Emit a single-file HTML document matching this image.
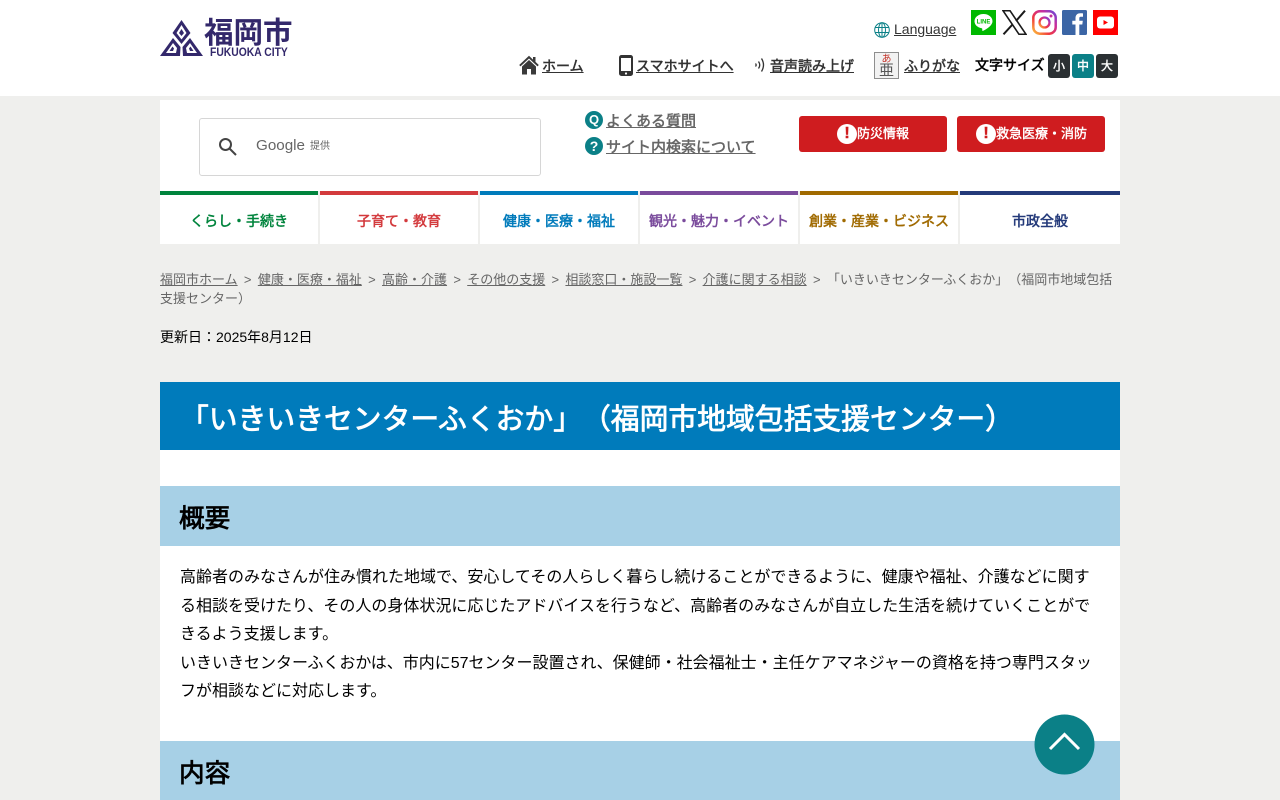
<!DOCTYPE html>
<html lang="ja">
<head>
<meta charset="utf-8">
<title>「いきいきセンターふくおか」（福岡市地域包括支援センター）</title>
<style>
html,body{margin:0;padding:0;width:1280px;height:800px;overflow:hidden;background:#efefed}
body{position:relative;font-family:"Liberation Sans","Noto Sans CJK JP",sans-serif;color:#000;text-spacing-trim:space-all}
.a{position:absolute;white-space:nowrap}
a{color:inherit;text-decoration:underline}
.b{font-weight:400;-webkit-text-stroke:.5px currentColor}
.hl{color:#333;font-size:14px;line-height:20px;font-weight:400;-webkit-text-stroke:.5px currentColor}
.nav{position:absolute;top:191px;height:49px;background:#fff;border-top:4px solid;text-align:center;font-size:14px;line-height:52px;font-weight:400;-webkit-text-stroke:.5px currentColor}
.bc{color:#666;font-size:13px}
.s{display:inline-block;width:20.200px;text-align:center}
.btn{position:absolute;top:116px;height:36px;width:148px;background:#cf1c1f;border-radius:3px;color:#fff;font-size:13px;line-height:36px;font-weight:400;-webkit-text-stroke:.4px currentColor}
.sz{position:absolute;top:54px;width:22px;height:24px;border-radius:3px;background:#2b3033;color:#fff;text-align:center;font-size:12px;line-height:24px;-webkit-text-stroke:.4px #fff}
h1,h2,p{margin:0;font-family:inherit;font-weight:400}
</style>
</head>
<body>
<div class="a" style="left:0;top:0;width:1280px;height:96px;background:#fff"></div>

<svg class="a" style="left:160px;top:20px" width="44" height="37" viewBox="0 0 44 37">
<g fill="#33286b">
<path d="M21.500 0L30.500 13L21.500 24L12.500 13Z"/>
<path d="M13 18L20.500 27L20 36H0Z"/>
<path d="M30 18L43 36H23L22.500 27Z"/>
</g>
<g fill="#fff">
<path d="M21.500 5L26.500 13L21.500 19.500L16.500 13Z"/>
<path d="M13 23L17 28L16 33H6Z"/>
<path d="M30 23L37 33H27L26 28Z"/>
</g>
<g fill="#33286b">
<path d="M21.500 9L24 13L21.500 16L19 13Z"/>
<path d="M12.500 26.500L14 28.500L13 31H9.500Z"/>
<path d="M30.500 26.500L33.500 31H30L29 28.500Z"/>
</g>
</svg>
<div class="a" style="left:204px;top:15px;font-size:29.500px;font-weight:bold;color:#33286b;line-height:38px">福岡市</div>
<div class="a" style="left:210px;top:46px;font-size:11.500px;font-weight:bold;color:#33286b;line-height:14px;transform:scaleX(.9);transform-origin:left">FUKUOKA CITY</div>

<svg class="a" style="left:874px;top:22px" width="16" height="16" viewBox="0 0 16 16" fill="none" stroke="#0b8087" stroke-width="1">
<circle cx="8" cy="8" r="7.300"/><ellipse cx="8" cy="8" rx="3.500" ry="7.300"/><path d="M8 .7V15.300M1 5.500H15M1 10.500H15"/>
</svg>
<a class="a" style="left:894px;top:20px;font-size:14px;line-height:18px;color:#333">Language</a>

<svg class="a" style="left:971px;top:10px" width="25" height="25" viewBox="0 0 25 25">
<rect width="25" height="25" fill="#00b900"/>
<path d="M12.500 4C7.500 4 3.500 7.200 3.500 11.200C3.500 14.800 6.600 17.500 10.700 18.200C11.500 18.400 11.300 19.500 11.200 20.300C11.100 21 11.800 21 12.500 20.600C15.500 19 21.500 15.500 21.500 11.200C21.500 7.200 17.500 4 12.500 4Z" fill="#fff"/>
<text x="12.500" y="13.300" text-anchor="middle" font-size="6" font-weight="bold" fill="#00b900" font-family="Liberation Sans">LINE</text>
</svg>
<svg class="a" style="left:1002px;top:10px" width="25" height="25" viewBox="0 0 25 25">
<path d="M1 .7H8L24 24.300H17Z" fill="#fff" stroke="#1a1a1a" stroke-width="1.600"/>
<path d="M23 .7L14 11M10.500 14.500L1.500 24.300" fill="none" stroke="#1a1a1a" stroke-width="2"/>
</svg>
<svg class="a" style="left:1032px;top:10px" width="25" height="25" viewBox="0 0 25 25">
<defs><linearGradient id="ig" x1="0" y1="1" x2="1" y2="0"><stop offset="0" stop-color="#fdc13b"/><stop offset=".35" stop-color="#f0383f"/><stop offset=".7" stop-color="#c72e9e"/><stop offset="1" stop-color="#6a48d8"/></linearGradient></defs>
<rect x="1.300" y="1.300" width="22.400" height="22.400" rx="6.500" fill="none" stroke="url(#ig)" stroke-width="2.500"/>
<circle cx="12.500" cy="12.500" r="5" fill="none" stroke="url(#ig)" stroke-width="2.300"/>
<circle cx="19" cy="6" r="1.500" fill="#c72e9e"/>
</svg>
<svg class="a" style="left:1062px;top:10px" width="25" height="25" viewBox="0 0 25 25">
<rect width="25" height="25" rx="1.500" fill="#3b65a5"/>
<path d="M13.500 25V14.500H10.300V10.700H13.500V8C13.500 4.800 15.500 3.200 18.300 3.200C19.600 3.200 20.500 3.300 21 3.400V6.700H19C17.500 6.700 17.300 7.400 17.300 8.500V10.700H20.800L20.300 14.500H17.300V25Z" fill="#fff"/>
</svg>
<svg class="a" style="left:1093px;top:10px" width="25" height="25" viewBox="0 0 25 25">
<rect width="25" height="25" fill="#f00"/>
<rect x="4" y="6.500" width="17" height="12" rx="3" fill="#fff"/>
<path d="M10.500 10V15L15 12.500Z" fill="#f00"/>
</svg>

<svg class="a" style="left:519px;top:55px" width="20" height="20" viewBox="0 0 20 20">
<path d="M10 .8L.2 10L1.500 11.400L10 3.500L18.500 11.400L19.800 10L16.500 6.900V2H14V4.600Z" fill="#3a3a3a"/>
<path d="M10 5L3 11.500V19.500H8V14H12V19.500H17V11.500Z" fill="#3a3a3a"/>
</svg>
<a class="a hl" style="left:542px;top:56px">ホーム</a>
<svg class="a" style="left:619px;top:55px" width="14" height="21" viewBox="0 0 14 21">
<rect width="14" height="21" rx="2.500" fill="#333"/><rect x="2" y="3" width="10" height="13" fill="#fff"/><circle cx="7" cy="18.500" r="1.100" fill="#fff"/>
</svg>
<a class="a hl" style="left:636px;top:56px">スマホサイトへ</a>
<svg class="a" style="left:753px;top:56px" width="14" height="18" viewBox="0 0 14 18" fill="none" stroke="#333" stroke-width="1.300">
<path d="M2.500 7.500Q3.800 9 2.500 10.500M5.500 5.500Q8 9 5.500 12.500M8.500 2.500Q12.500 9 8.500 15.500"/>
</svg>
<a class="a hl" style="left:770px;top:56px">音声読み上げ</a>
<div class="a" style="left:874px;top:52px;width:23px;height:25px;border:1px solid #8e8e8e;background:#f2f2f2;color:#555;text-align:center">
<span style="position:absolute;left:0;right:0;top:1px;font-size:10px;line-height:11px;color:#c4342a">あ</span>
<span style="position:absolute;left:0;right:0;top:10px;font-size:15px;line-height:15px">亜</span>
</div>
<a class="a hl" style="left:904px;top:56px">ふりがな</a>
<div class="a b" style="left:975px;top:55px;font-size:14px;line-height:20px">文字サイズ</div>
<div class="sz" style="left:1048px">小</div>
<div class="sz" style="left:1072px;background:#0b8087">中</div>
<div class="sz" style="left:1096px">大</div>

<div class="a" style="left:160px;top:100px;width:960px;height:91px;background:#fff"></div>
<div class="a" style="left:199px;top:118px;width:340px;height:56px;border:1px solid #d6d6d6;border-radius:3px;background:#fff"></div>
<svg class="a" style="left:218px;top:137px" width="20" height="20" viewBox="0 0 20 20" fill="none" stroke="#444" stroke-width="2">
<circle cx="7.500" cy="7.500" r="5.500"/><path d="M11.500 11.500L18 18"/>
</svg>
<div class="a" style="left:256px;top:136px;font-size:15.200px;line-height:20px;color:#666">Google</div>
<div class="a" style="left:310px;top:140px;font-size:10px;line-height:13px;color:#666">提供</div>

<div class="a" style="left:585px;top:111px;width:18px;height:18px;border-radius:50%;background:#0b8087;color:#fff;text-align:center;font-size:13px;font-weight:bold;line-height:18px">Q</div>
<a class="a b" style="left:606px;top:112px;font-size:15px;line-height:20px;color:#666">よくある質問</a>
<div class="a" style="left:585px;top:137px;width:18px;height:18px;border-radius:50%;background:#0b8087;color:#fff;text-align:center;font-size:14px;font-weight:bold;line-height:18px">?</div>
<a class="a b" style="left:606px;top:138px;font-size:15px;line-height:20px;color:#666">サイト内検索について</a>

<div class="btn" style="left:799px"><span style="position:absolute;left:38px;top:8px;width:20px;height:20px;border-radius:50%;background:#fff;color:#cf1c1f;text-align:center;font-size:16px;font-weight:bold;line-height:20px">!</span><span style="position:absolute;left:58px">防災情報</span></div>
<div class="btn" style="left:957px"><span style="position:absolute;left:19px;top:8px;width:20px;height:20px;border-radius:50%;background:#fff;color:#cf1c1f;text-align:center;font-size:16px;font-weight:bold;line-height:20px">!</span><span style="position:absolute;left:39px">救急医療・消防</span></div>

<div class="nav" style="left:160px;width:158px;border-color:#00843d;color:#00843d">くらし・手続き</div>
<div class="nav" style="left:320px;width:158px;border-color:#d33a3d;color:#d33a3d">子育て・教育</div>
<div class="nav" style="left:480px;width:158px;border-color:#007bbb;color:#007bbb">健康・医療・福祉</div>
<div class="nav" style="left:640px;width:158px;border-color:#7a4b9c;color:#7a4b9c">観光・魅力・イベント</div>
<div class="nav" style="left:800px;width:158px;border-color:#a06a00;color:#a06a00">創業・産業・ビジネス</div>
<div class="nav" style="left:960px;width:160px;border-color:#243a7a;color:#243a7a">市政全般</div>

<div class="a bc" style="left:160px;top:270px;line-height:19px"><a>福岡市ホーム</a><span class="s">&gt;</span><a>健康・医療・福祉</a><span class="s">&gt;</span><a>高齢・介護</a><span class="s">&gt;</span><a>その他の支援</a><span class="s">&gt;</span><a>相談窓口・施設一覧</a><span class="s">&gt;</span><a>介護に関する相談</a><span class="s">&gt;</span>「いきいきセンターふくおか」（福岡市地域包括<br>支援センター）</div>
<div class="a" style="left:160px;top:327px;font-size:14px;line-height:20px">更新日：2025年8月12日</div>

<div class="a" style="left:160px;top:382px;width:960px;height:418px;background:#fff"></div>
<h1 class="a" style="left:160px;top:382px;width:940px;height:68px;padding-left:20px;background:#007bbb;color:#fff;font-size:28.800px;line-height:76px;-webkit-text-stroke:.8px #fff">「いきいきセンターふくおか」（福岡市地域包括支援センター）</h1>
<h2 class="a" style="left:160px;top:486px;width:941px;height:60px;padding-left:19px;background:#a7d0e6;font-size:25.600px;line-height:66px;-webkit-text-stroke:.8px #000">概要</h2>
<p class="a" style="left:180px;top:564px;font-size:16px;line-height:28.500px">高齢者のみなさんが住み慣れた地域で、安心してその人らしく暮らし続けることができるように、健康や福祉、介護などに関す<br>る相談を受けたり、その人の身体状況に応じたアドバイスを行うなど、高齢者のみなさんが自立した生活を続けていくことがで<br>きるよう支援します。<br>いきいきセンターふくおかは、市内に57センター設置され、保健師・社会福祉士・主任ケアマネジャーの資格を持つ専門スタッ<br>フが相談などに対応します。</p>
<h2 class="a" style="left:160px;top:741px;width:941px;height:59px;padding-left:19px;background:#a7d0e6;font-size:25.600px;line-height:66px;-webkit-text-stroke:.8px #000;overflow:hidden">内容</h2>

<svg class="a" style="left:1034px;top:714px" width="61" height="61" viewBox="0 0 61 61">
<circle cx="30.500" cy="30.500" r="30" fill="#0b8087"/>
<path d="M16 35L30.500 20.500L45 35" fill="none" stroke="#fff" stroke-width="3"/>
</svg>
</body>
</html>
